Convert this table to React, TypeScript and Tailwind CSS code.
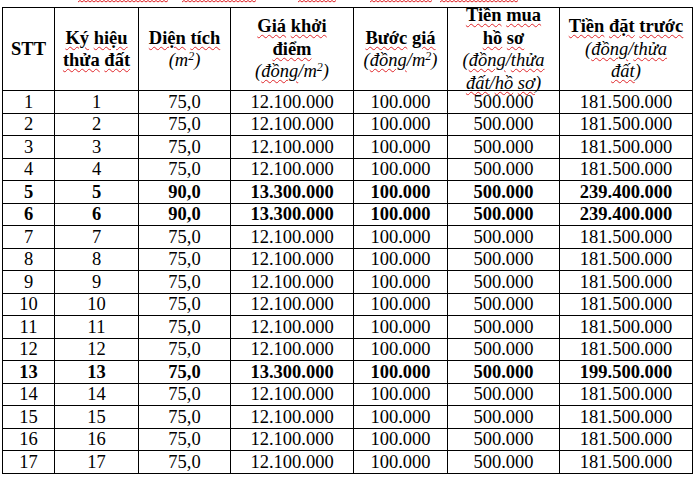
import React from 'react'

// Spell-check style red squiggle under a word
function W({ children }: { children: React.ReactNode }) {
  return (
    <span className="underline decoration-wavy decoration-[#e0262a] decoration-1 underline-offset-[2px]">
      {children}
    </span>
  )
}

const cols = [52, 84, 92, 123, 94, 112, 133]

type Row = { stt: number; area: string; start: string; deposit: string; bold?: boolean }

const rows: Row[] = Array.from({ length: 17 }, (_, i) => {
  const n = i + 1
  if (n === 5 || n === 6) return { stt: n, area: '90,0', start: '13.300.000', deposit: '239.400.000', bold: true }
  if (n === 13) return { stt: n, area: '75,0', start: '13.300.000', deposit: '199.500.000', bold: true }
  return { stt: n, area: '75,0', start: '12.100.000', deposit: '181.500.000' }
})

function Sq() {
  return (
    <>
      m<span className="relative -top-[6px] text-[12px] leading-none">2</span>
    </>
  )
}

export default function App() {
  return (
    <div className="w-[700px] h-[477px] bg-white overflow-hidden relative text-black font-['Liberation_Serif','Times_New_Roman',serif]">
      {/* remnants of the line above, cut off by the crop */}
      <div className="absolute top-0 left-0 h-[3px] w-full">
        <svg width="700" height="3" className="block">
          {[
            [78, 170],
            [182, 258],
            [298, 338],
            [370, 435],
            [440, 520],
          ].map(([a, b]) => (
            <path
              key={a}
              d={Array.from({ length: Math.floor((b - a) / 2) }, (_, k) => `${k === 0 ? 'M' : 'L'}${a + k * 2} ${k % 2 ? 0.5 : 2}`).join(' ')}
              stroke="#e0262a"
              strokeWidth="1"
              fill="none"
            />
          ))}
        </svg>
      </div>

      <table className="table-fixed border-collapse ml-[2px] mt-[7px] text-[18.5px] font-['Liberation_Serif','Times_New_Roman',serif]">
        <colgroup>
          {cols.map((w, i) => (
            <col key={i} style={{ width: w }} />
          ))}
        </colgroup>
        <thead>
          <tr className="font-bold">
            {[
              <>STT</>,
              <>
                <W>Ký</W> <W>hiệu</W>
                <br />
                <W>thửa</W> <W>đất</W>
              </>,
              <>
                <W>Diện</W> <W>tích</W>
                <br />
                <span className="italic font-normal">
                  (<Sq />)
                </span>
              </>,
              <>
                <W>Giá</W> <W>khởi</W>
                <br />
                <W>điểm</W>
                <br />
                <span className="italic font-normal">
                  (<W>đồng</W>/<Sq />)
                </span>
              </>,
              <>
                <W>Bước</W> <W>giá</W>
                <br />
                <span className="italic font-normal">
                  (<W>đồng</W>/<Sq />)
                </span>
              </>,
              <>
                <W>Tiền</W> <W>mua</W>
                <br />
                <W>hồ</W> <W>sơ</W>
                <br />
                <span className="italic font-normal">
                  (<W>đồng</W>/<W>thửa</W>
                  <br />
                  <W>đất</W>/<W>hồ</W> <W>sơ</W>)
                </span>
              </>,
              <>
                <W>Tiền</W> <W>đặt</W> <W>trước</W>
                <br />
                <span className="italic font-normal">
                  (<W>đồng</W>/<W>thửa</W>
                  <br />
                  <W>đất</W>)
                </span>
              </>,
            ].map((c, i) => (
              <th key={i} className="border border-black p-0 font-bold">
                <div className="h-[82px] flex items-center justify-center text-center leading-[22.5px]">
                  <div>{c}</div>
                </div>
              </th>
            ))}
          </tr>
        </thead>
        <tbody className="leading-[20px]">
          {rows.map((r) => (
            <tr key={r.stt} className={`h-[22.5px] ${r.bold ? 'font-bold' : ''}`}>
              <td className="border border-black p-0 text-center">{r.stt}</td>
              <td className="border border-black p-0 text-center">{r.stt}</td>
              <td className="border border-black p-0 text-center">{r.area}</td>
              <td className="border border-black p-0 text-center">{r.start}</td>
              <td className="border border-black p-0 text-center">100.000</td>
              <td className="border border-black p-0 text-center">500.000</td>
              <td className="border border-black p-0 text-center">{r.deposit}</td>
            </tr>
          ))}
        </tbody>
      </table>
    </div>
  )
}
